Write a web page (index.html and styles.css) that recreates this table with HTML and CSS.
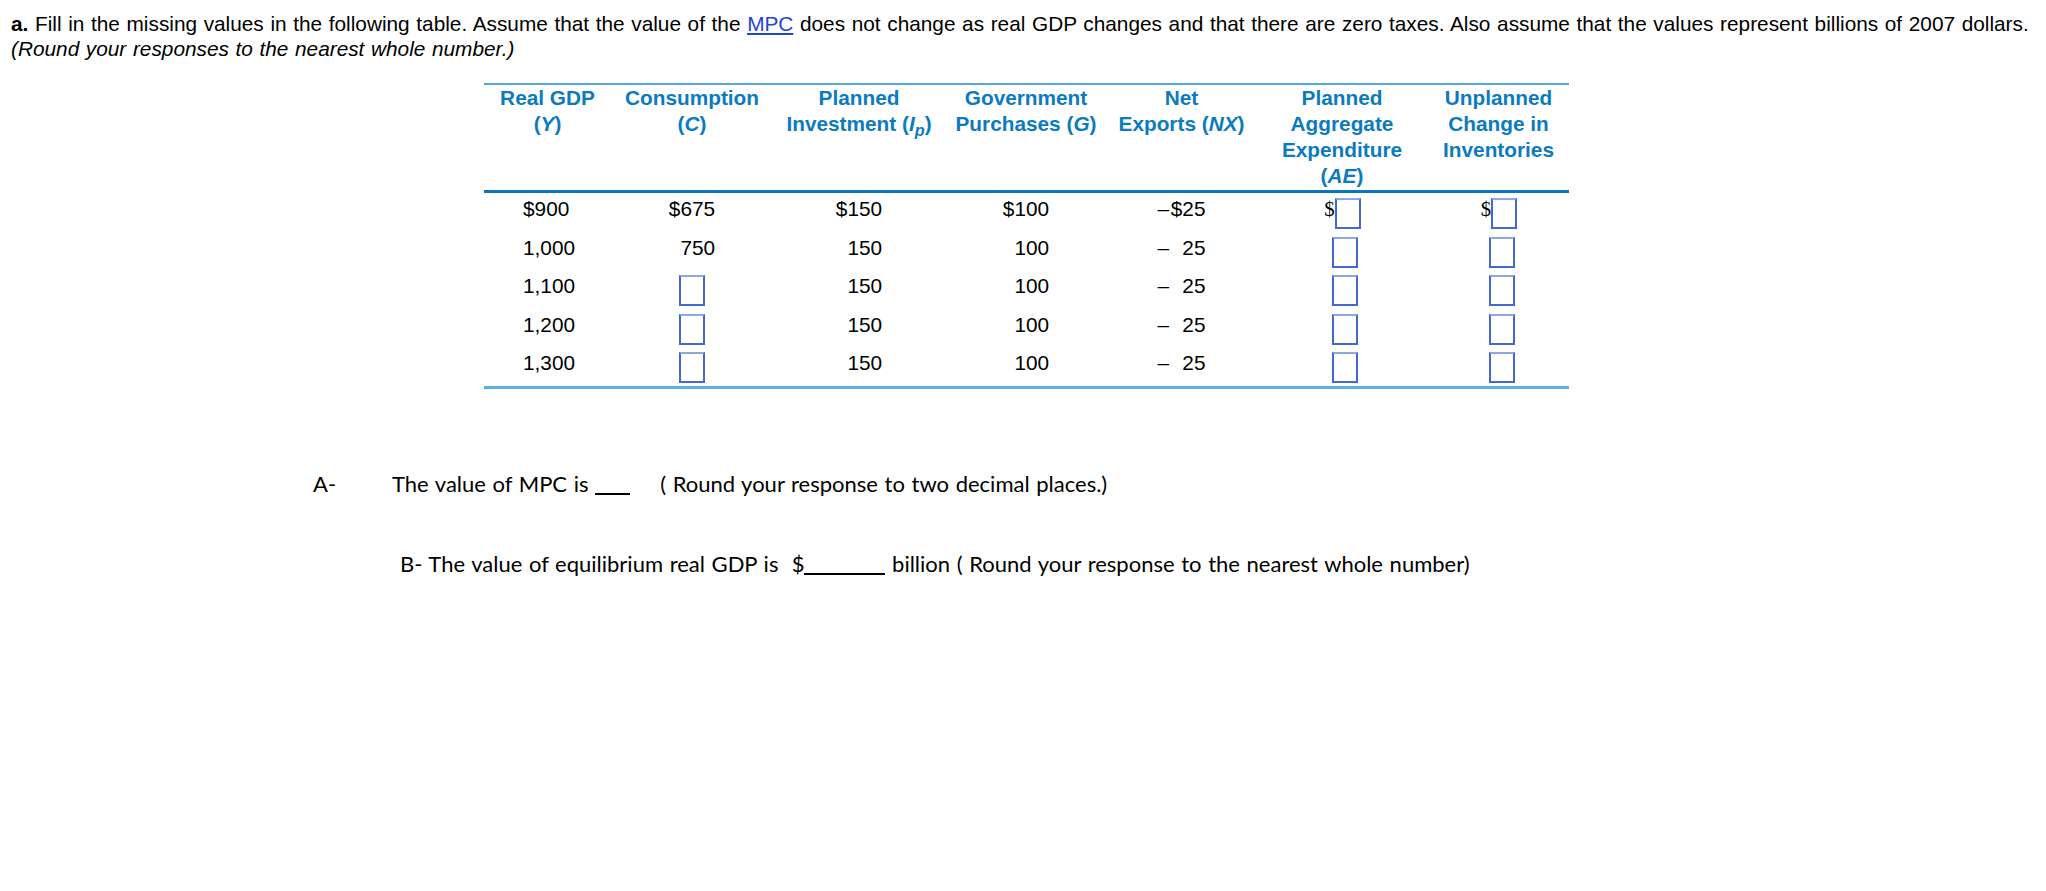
FILE: index.html
```html
<!DOCTYPE html>
<html lang="en">
<head>
<meta charset="utf-8">
<title>Aggregate expenditure table</title>
<link rel="stylesheet" href="styles.css">
</head>
<body>
<div class="page">
  <div class="prompt">
    <p class="line"><b>a.</b> Fill in the missing values in the following table. Assume that the value of the <a href="#" class="term">MPC</a> does not change as real GDP changes and that there are zero taxes. Also assume that the values represent billions of 2007 dollars.</p>
    <p class="line note">(Round your responses to the nearest whole number.)</p>
  </div>

  <div class="table-wrap">
    <table class="ae-table">
      <colgroup>
        <col class="c1"><col class="c2"><col class="c3"><col class="c4"><col class="c5"><col class="c6"><col class="c7">
      </colgroup>
      <thead>
        <tr>
          <th>Real GDP<br>(<i>Y</i>)</th>
          <th>Consumption<br>(<i>C</i>)</th>
          <th>Planned<br>Investment (<i>I<sub>p</sub></i>)</th>
          <th>Government<br>Purchases (<i>G</i>)</th>
          <th>Net<br>Exports (<i>NX</i>)</th>
          <th>Planned<br>Aggregate<br>Expenditure<br>(<i>AE</i>)</th>
          <th>Unplanned<br>Change in<br>Inventories</th>
        </tr>
      </thead>
      <tbody>
        <tr>
          <td class="gdp">$900</td>
          <td>$675</td>
          <td>$150</td>
          <td>$100</td>
          <td>&ndash;&#8202;$25</td>
          <td class="shift"><span class="dollar">$</span><span class="ans"></span></td>
          <td class="shift"><span class="dollar">$</span><span class="ans"></span></td>
        </tr>
        <tr>
          <td class="gdp">1,000</td>
          <td>&#8199;750</td>
          <td>&#8199;150</td>
          <td>&#8199;100</td>
          <td>&ndash;&#8202;&#8199;25</td>
          <td class="shift"><span class="ans"></span></td>
          <td class="shift"><span class="ans"></span></td>
        </tr>
        <tr>
          <td class="gdp">1,100</td>
          <td><span class="ans"></span></td>
          <td>&#8199;150</td>
          <td>&#8199;100</td>
          <td>&ndash;&#8202;&#8199;25</td>
          <td class="shift"><span class="ans"></span></td>
          <td class="shift"><span class="ans"></span></td>
        </tr>
        <tr>
          <td class="gdp">1,200</td>
          <td><span class="ans"></span></td>
          <td>&#8199;150</td>
          <td>&#8199;100</td>
          <td>&ndash;&#8202;&#8199;25</td>
          <td class="shift"><span class="ans"></span></td>
          <td class="shift"><span class="ans"></span></td>
        </tr>
        <tr>
          <td class="gdp">1,300</td>
          <td><span class="ans"></span></td>
          <td>&#8199;150</td>
          <td>&#8199;100</td>
          <td>&ndash;&#8202;&#8199;25</td>
          <td class="shift"><span class="ans"></span></td>
          <td class="shift"><span class="ans"></span></td>
        </tr>
      </tbody>
    </table>
  </div>

  <div class="answers">
    <div class="ans-row row-a">
      <span class="ans-label">A-</span>
      <span class="ans-text">The value of MPC is <span class="blank blank-short"></span></span>
      <span class="ans-hint">( Round your response to two decimal places.)</span>
    </div>
    <div class="ans-row row-b">
      <span class="ans-text">B- The value of equilibrium real GDP is&nbsp; $<span class="blank blank-long"></span> billion ( Round your response to the nearest whole number)</span>
    </div>
  </div>
</div>
</body>
</html>
```

FILE: styles.css
```css
html, body {
  margin: 0;
  padding: 0;
  background: #ffffff;
}

body {
  font-family: "Liberation Sans", Arial, sans-serif;
  color: #000000;
}

.page {
  width: 2046px;
}

/* Prompt */
.prompt {
  padding: 11px 0 0 11px;
  font-size: 20.8px;
  line-height: 25px;
  word-spacing: 0.85px;
}

.line {
  margin: 0;
  white-space: nowrap;
}

.note {
  font-style: italic;
}

.term {
  color: #1f45d6;
  text-decoration: underline;
}

/* Table */
.table-wrap {
  margin-top: 22px;
  padding-left: 484px;
}

.ae-table {
  border-collapse: separate;
  border-spacing: 0;
  table-layout: fixed;
  width: 1085px;
  border-top: 2px solid #55a7d9;
  border-bottom: 3px solid #5eb0dc;
  font-size: 20.8px;
}

.c1 { width: 127px; }
.c2 { width: 162px; }
.c3 { width: 172px; }
.c4 { width: 162px; }
.c5 { width: 149px; }
.c6 { width: 172px; }
.c7 { width: 141px; }

.ae-table th {
  color: #0b7bc0;
  font-weight: bold;
  line-height: 26px;
  vertical-align: top;
  text-align: center;
  white-space: nowrap;
  padding: 0 0 1px;
  border-bottom: 3px solid #0a76bc;
}

.ae-table th sub {
  font-size: 0.78em;
  line-height: 0;
  vertical-align: -0.3em;
}

.ae-table tbody tr {
  height: 38.5px;
}

.ae-table td {
  padding: 0;
  line-height: 32px;
  vertical-align: top;
  text-align: center;
  white-space: nowrap;
}

.ae-table td.gdp {
  text-align: left;
  padding-left: 39px;
}

.ae-table td.shift {
  padding-left: 6px;
}

.dollar {
  font-family: "Liberation Serif", "Times New Roman", serif;
  margin-left: -5px;
}

.ans {
  display: inline-block;
  box-sizing: border-box;
  width: 26px;
  height: 31px;
  vertical-align: -13px;
  border: 2px solid #4169d0;
  border-top-color: #8ea8e6;
  background: #ffffff;
}

/* Answers */
.answers {
  margin-top: 80px;
  padding-left: 313px;
  font-family: Lato, "Open Sans", sans-serif;
  font-size: 22px;
  line-height: 30px;
  word-spacing: 1px;
  color: #000000;
}

.ans-row {
  display: flex;
  align-items: baseline;
  white-space: nowrap;
}

.ans-label {
  width: 79px;
}

.ans-hint {
  margin-left: 30px;
}

.row-b {
  margin-top: 50px;
  padding-left: 87px;
}

.blank {
  display: inline-block;
  height: 2px;
  background: #000000;
  vertical-align: -3px;
}

.blank-short {
  width: 35px;
}

.blank-long {
  width: 81px;
}
```
